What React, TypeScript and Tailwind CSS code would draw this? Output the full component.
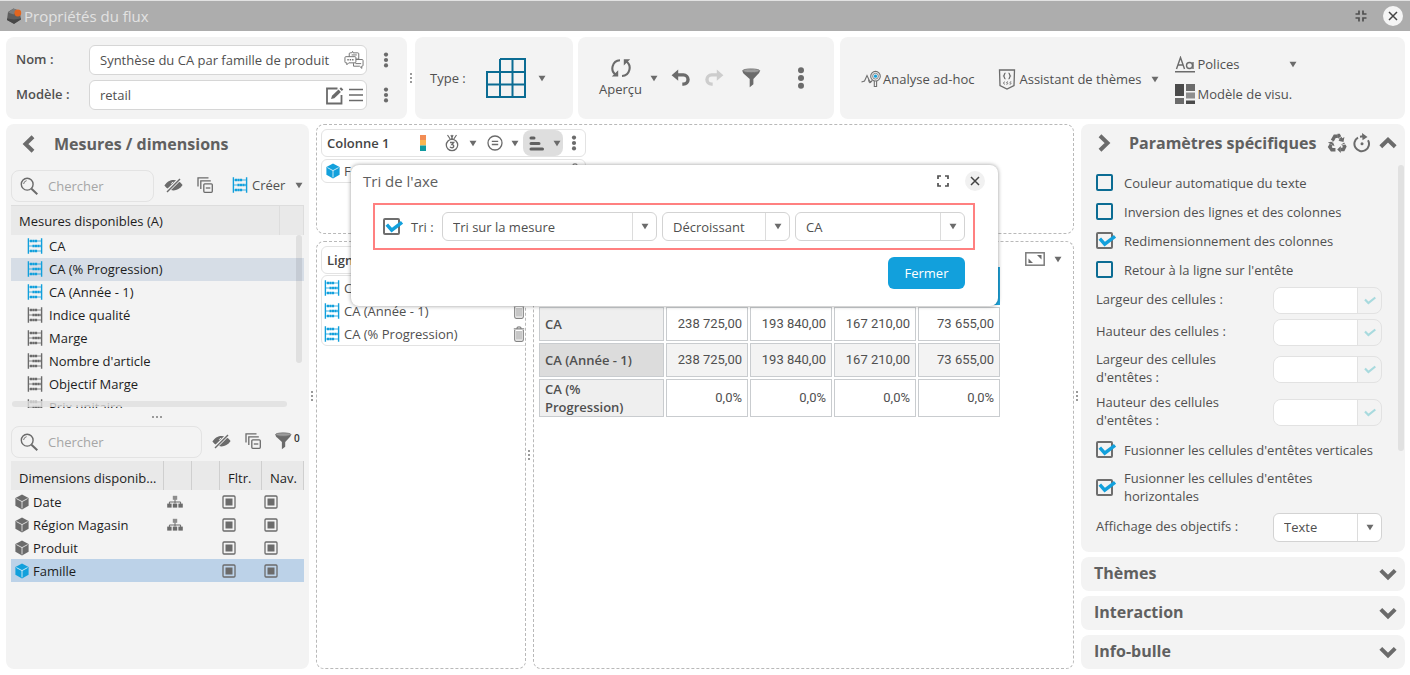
import React from "react";

type IconProps = { className?: string };

const BLUE = "text-[#12a0dc]";

function Caret({ className = "" }: IconProps) {
  return (
    <svg className={`shrink-0 ${className}`} width="8" height="7" viewBox="0 0 8 7" aria-hidden="true">
      <path d="M0.5 0.8h7L4 6.3z" fill="#6b6b6b" />
    </svg>
  );
}

function Kebab({ large = false }: { large?: boolean }) {
  return large ? (
    <svg width="8" height="22" viewBox="0 0 8 22" fill="#6b6b6b" aria-hidden="true">
      <circle cx="4" cy="3.3" r="3" />
      <circle cx="4" cy="11" r="3" />
      <circle cx="4" cy="18.7" r="3" />
    </svg>
  ) : (
    <svg width="6" height="16" viewBox="0 0 6 16" fill="#6b6b6b" aria-hidden="true">
      <circle cx="3" cy="2.6" r="2.1" />
      <circle cx="3" cy="8" r="2.1" />
      <circle cx="3" cy="13.4" r="2.1" />
    </svg>
  );
}

function Dots({ horizontal = false }: { horizontal?: boolean }) {
  return (
    <svg
      className="shrink-0"
      width={horizontal ? 11 : 3}
      height={horizontal ? 3 : 11}
      viewBox={horizontal ? "0 0 11 3" : "0 0 3 11"}
      fill="#9a9a9a"
      aria-hidden="true"
    >
      {[0, 4, 8].map((p) => (
        <rect key={p} x={horizontal ? p : 0} y={horizontal ? 0 : p} width="2" height="2" />
      ))}
    </svg>
  );
}

function Abacus({ className = "" }: IconProps) {
  return (
    <svg className={`shrink-0 ${className}`} width="16" height="16" viewBox="0 0 16 16" fill="none" stroke="currentColor" aria-hidden="true">
      <path d="M1.4 0.3v15.4M14.6 0.3v15.4" strokeWidth="1.4" />
      <path d="M1 3h14M1 8h14M1 13h14" strokeWidth="0.8" />
      <path d="M3 3h7.500M5.5 8h8M3 13h7.500" strokeWidth="2.6" strokeDasharray="2.1 0.4" />
    </svg>
  );
}

function Cube({ className = "" }: IconProps) {
  return (
    <svg className={`shrink-0 ${className}`} width="14" height="16" viewBox="0 0 14 16" aria-hidden="true">
      <path d="M7 0.6l6.6 3.5v7.7L7 15.4 0.4 11.8V4.1z" fill="currentColor" />
      <path d="M1.4 4.6L7 7.6l5.6-3M7 7.6v6.8" stroke="#fff" strokeOpacity="0.75" strokeWidth="1" fill="none" />
    </svg>
  );
}

function Trash() {
  return (
    <svg className="shrink-0 text-[#858585]" width="12" height="16" viewBox="0 0 12 16" fill="none" stroke="currentColor" aria-hidden="true">
      <path d="M0.8 2.9h10.4M3.8 2.6C4 0.9 5 0.8 6 0.8s2 .1 2.2 1.8" strokeWidth="1.3" />
      <path d="M1.7 4v9.8c0 .9.5 1.5 1.4 1.5h5.800c.9 0 1.4-.6 1.4-1.500V4" strokeWidth="1.2" />
      <path d="M4 5v8.6M6 5v8.6M8 5v8.6" strokeWidth="0.9" />
    </svg>
  );
}

function EyeOff() {
  return (
    <svg width="19" height="16" viewBox="0 0 19 16" aria-hidden="true">
      <path d="M0.4 8.6C3 4.400 6.200 3 9.600 3s6.500 1.400 9 5c-2.500 3.800-5.700 5.400-9.100 5.400S3 12.200 0.400 8.600z" fill="#6b6b6b" />
      <path d="M2.800 14.800L16 1.800" stroke="#f3f3f3" strokeWidth="3.400" />
      <path d="M3 15L16 2" stroke="#6b6b6b" strokeWidth="1.500" />
      <path d="M7.200 6.800a2.600 2.600 0 0 1 2-1.600" stroke="#f3f3f3" fill="none" strokeWidth="0.900" />
    </svg>
  );
}

function CollapseAll() {
  return (
    <svg width="16" height="16" viewBox="0 0 16 16" fill="none" stroke="#6b6b6b" strokeWidth="1.300" aria-hidden="true">
      <path d="M1 9.500V0.900h10.500" />
      <path d="M3.800 12V3.800h10" />
      <rect x="6.800" y="6.800" width="8.500" height="8.500" rx="1" />
      <path d="M8.800 11h4.500" />
    </svg>
  );
}

function Funnel({ small = false }: { small?: boolean }) {
  return (
    <svg width={small ? 17 : 19} height={small ? 18 : 20} viewBox="0 0 19 20" aria-hidden="true">
      <path d="M0.600 2.900h17.100c0 1.600-1 2.500-2.100 3.700L11.400 11v5.300L7.700 19.200V11L2.600 6.400C1.400 5.200 0.600 4.500 0.600 2.900z" fill="#6b6b6b" />
      <ellipse cx="9.200" cy="2.800" rx="8.600" ry="1.900" fill="#9c9c9c" stroke="#6b6b6b" strokeWidth="0.800" />
    </svg>
  );
}

function Magnifier() {
  return (
    <svg className="shrink-0" width="18" height="19" viewBox="0 0 18 19" fill="none" stroke="#6b6b6b" aria-hidden="true">
      <circle cx="7.200" cy="7.200" r="5.900" strokeWidth="1.400" />
      <path d="M3.600 7a3.700 3.700 0 0 1 3-3.300" strokeWidth="0.900" />
      <path d="M11.500 11.700l5.800 5.500" strokeWidth="2" />
    </svg>
  );
}

function Chevron({ dir }: { dir: "left" | "right" | "up" | "down" }) {
  const paths = {
    left: "M14 1.800L6.500 9l7.500 7.200",
    right: "M4 1.800L11.500 9 4 16.200",
    up: "M1.800 12.800L9 5.800l7.200 7",
    down: "M1.800 5.400L9 12.400l7.200-7",
  };
  return (
    <svg width="18" height="18" viewBox="0 0 18 18" fill="none" stroke="#6b6b6b" strokeWidth="4" aria-hidden="true">
      <path d={paths[dir]} />
    </svg>
  );
}

function Hierarchy() {
  return (
    <svg width="16" height="14" viewBox="0 0 16 14" fill="#6b6b6b" aria-hidden="true">
      <rect x="5.800" y="0.800" width="4.400" height="4" fill="#8d8d8d" />
      <path d="M8 4.500v4M2.400 9.500V7h11.200v2.500" stroke="#6b6b6b" strokeWidth="1" fill="none" />
      <rect x="0.200" y="8.600" width="4.400" height="4" />
      <rect x="5.800" y="8.600" width="4.400" height="4" />
      <rect x="11.400" y="8.600" width="4.400" height="4" />
    </svg>
  );
}

function SquareDot() {
  return (
    <svg width="14" height="14" viewBox="0 0 14 14" aria-hidden="true">
      <rect x="1" y="1" width="12" height="12" rx="1" fill="none" stroke="#6b6b6b" strokeWidth="1.300" />
      <rect x="3.500" y="3.500" width="7" height="7" fill="#6b6b6b" />
    </svg>
  );
}

function Tick({ className = "" }: IconProps) {
  return (
    <svg className={className} width="20" height="14" viewBox="0 0 20 14" fill="none" aria-hidden="true">
      <path d="M3.800 4.600l4.900 5.500L19 2.300" stroke="#12a0dc" strokeWidth="3.400" />
    </svg>
  );
}

function CheckBox({ id, checked }: { id: string; checked?: boolean }) {
  return (
    <span className="relative flex size-[18px] shrink-0 items-center">
      <input
        id={id}
        type="checkbox"
        defaultChecked={checked}
        className="peer size-[17px] appearance-none rounded-[2px] border-2 border-[#0b6c93] bg-transparent checked:border-[#6e6e6e]"
      />
      <Tick className="pointer-events-none absolute top-0.5 left-0 hidden peer-checked:block" />
    </span>
  );
}

function Select({ label, options, className = "" }: { label: string; options: string[]; className?: string }) {
  return (
    <span className={`relative flex h-[29px] rounded-md border border-[#d3d3d3] bg-white ${className}`}>
      <select aria-label={label} className="min-w-0 flex-1 appearance-none bg-transparent pr-6 pl-2.5 text-[#4f4f4f] outline-none">
        {options.map((o) => (
          <option key={o}>{o}</option>
        ))}
      </select>
      <span className="pointer-events-none absolute inset-y-0 right-0 flex w-6 items-center justify-center border-l border-[#dcdcdc]">
        <Caret />
      </span>
    </span>
  );
}

function SearchBox({ label, className = "" }: { label: string; className?: string }) {
  return (
    <label className={`flex h-8 items-center gap-2.5 rounded-lg border border-[#e3e3e3] pl-2 ${className}`}>
      <Magnifier />
      <input aria-label={label} placeholder="Chercher" className="w-0 flex-1 bg-transparent outline-none placeholder:text-[#a6a6a6]" />
    </label>
  );
}

function TitleBar() {
  return (
    <header className="flex h-[31px] items-center border-t border-[#e2e2e2] bg-[#adadad] pr-[7px] pl-1.5">
      <svg width="17" height="18" viewBox="0 0 17 18" aria-hidden="true">
        <path d="M7.500 1.500l6 2.500 1.500 8-7 4.500-7-3.500L2 5z" fill="#5e5e5e" />
        <path d="M2 5.500l5.500-4 4.500 2-4.500 4z" fill="#7d7d7d" />
        <path d="M1 11.500l7 1 7-1v1L8 17l-7-4z" fill="#474747" />
        <circle cx="11.800" cy="6" r="3.400" fill="#e2651f" />
      </svg>
      <h1 className="pl-px text-[15px] leading-5 text-[#e2e2e2]">Propriétés du flux</h1>
      <div className="ml-auto flex items-center gap-4">
        <button aria-label="Réduire">
          <svg width="12" height="12" viewBox="0 0 12 12" fill="none" stroke="#505050" strokeWidth="1.700" aria-hidden="true">
            <path d="M4 0.500V4H0.500M8 0.500V4h3.500M4 11.500V8H0.500M8 11.500V8h3.500" />
          </svg>
        </button>
        <button aria-label="Fermer la fenêtre" className="flex size-5 items-center justify-center rounded-full bg-[#f5f5f5]">
          <svg width="10" height="10" viewBox="0 0 10 10" stroke="#444" strokeWidth="1.500" aria-hidden="true">
            <path d="M1 1l8 8M9 1L1 9" />
          </svg>
        </button>
      </div>
    </header>
  );
}

function Toolbar() {
  return (
    <div className="flex">
      <section className="flex w-[401px] shrink-0 flex-col gap-[5px] rounded-lg bg-[#f3f3f3] pt-2 pr-[18px] pb-[9px] pl-2.5">
        <div className="flex items-center">
          <label htmlFor="nom" className="w-[73px] pb-0.5 font-semibold">Nom :</label>
          <div className="flex h-[30px] flex-1 items-center rounded-md border border-[#d6d6d6] bg-white pr-0.5 pl-2.5">
            <input id="nom" defaultValue="Synthèse du CA par famille de produit" className="w-0 flex-1 bg-transparent outline-none" />
            <button aria-label="Traductions">
              <svg width="20" height="20" viewBox="0 0 21 20" fill="#fff" stroke="#707070" strokeWidth="1" aria-hidden="true">
                <path d="M5.500 6.500V3.500a1 1 0 0 1 1-1h1.500l1-1.500.5 1.500h5a1 1 0 0 1 1 1v5.500H5.500z" />
                <path d="M8 4.700h5.500" />
                <path d="M12 9.500h7a1 1 0 0 1 1 1v5a1 1 0 0 1-1 1h-.5l.3 2.300-2.500-2.300h-6.300v-3z" />
                <path d="M12 13.800h6" />
                <path d="M2 6.500h9.500a1 1 0 0 1 1 1v4.500a1 1 0 0 1-1 1H5l-2 2v-2H2a1 1 0 0 1-1-1V7.500a1 1 0 0 1 1-1z" />
                <path d="M3.500 9.700h7" strokeWidth="1.600" strokeDasharray="1.500 1" />
              </svg>
            </button>
          </div>
          <button aria-label="Options du nom" className="ml-4"><Kebab /></button>
        </div>
        <div className="flex items-center">
          <label htmlFor="modele" className="w-[73px] pb-0.5 font-semibold">Modèle :</label>
          <div className="flex h-[30px] flex-1 items-center gap-1 rounded-md border border-[#d6d6d6] bg-white pr-0.5 pl-2.5">
            <input id="modele" defaultValue="retail" className="w-0 flex-1 bg-transparent outline-none" />
            <button aria-label="Éditer le modèle">
              <svg width="19" height="19" viewBox="0 0 19 19" fill="none" stroke="#6b6b6b" aria-hidden="true">
                <path d="M12.500 2.500H2v15h14.500V9" strokeWidth="1.800" />
                <path d="M6 13l1-3.200 6.500-6.300 2.400 2.400-6.600 6.300z" fill="#6b6b6b" stroke="none" />
                <path d="M14.500 2.700l1.500-1.500 2.300 2.300-1.500 1.500z" fill="#6b6b6b" stroke="none" />
              </svg>
            </button>
            <button aria-label="Liste des modèles">
              <svg width="16" height="14" viewBox="0 0 16 14" stroke="#6b6b6b" strokeWidth="1.600" aria-hidden="true">
                <path d="M1 1.500h14M1 7h14M1 12.500h14" />
              </svg>
            </button>
          </div>
          <button aria-label="Options du modèle" className="ml-4"><Kebab /></button>
        </div>
      </section>
      <div className="flex w-2 items-center justify-center"><Dots /></div>
      <section className="flex w-[158px] shrink-0 items-center rounded-lg bg-[#f3f3f3] pl-[15px]">
        <span className="w-14">Type :</span>
        <button aria-label="Type de tableau" className="flex items-center gap-3">
          <svg width="40" height="40" viewBox="0 0 40 40" fill="none" stroke="#0b6c93" strokeWidth="2" aria-hidden="true">
            <path d="M14 1h25v38H1V14h38M1 26.500h38M14 1v38M26.500 1v38" />
          </svg>
          <Caret />
        </button>
      </section>
      <section className="ml-[5px] flex w-64 shrink-0 items-center rounded-lg bg-[#f3f3f3] pl-[21px]">
        <button className="flex flex-col items-center">
          <svg width="20" height="22" viewBox="0 0 20 22" fill="none" stroke="#6b6b6b" strokeWidth="2.100" aria-hidden="true">
            <path d="M5.200 18A8 8 0 0 1 9 3.200M14.800 4.200A8 8 0 0 1 11 19" />
            <path d="M0.800 19.500h6.400v-6.300zM19.200 2.300h-6.400v6.300z" fill="#6b6b6b" stroke="none" />
          </svg>
          <span className="leading-5">Aperçu</span>
        </button>
        <button aria-label="Options de l'aperçu" className="ml-2"><Caret /></button>
        <button aria-label="Annuler" className="ml-[13px]">
          <svg width="20" height="18" viewBox="0 0 20 18" fill="#6b6b6b" aria-hidden="true">
            <path d="M0.600 6.200L7.200 0.600v3.700h5.300a6.200 6.200 0 0 1 0 12.500h-1.200v-3.200h1a3 3 0 0 0 0-6.100H7.200v4.300z" />
          </svg>
        </button>
        <button aria-label="Rétablir" className="ml-[13px]">
          <svg width="20" height="18" viewBox="0 0 20 18" fill="#cdcdcd" aria-hidden="true">
            <path d="M19.400 6.200L12.800 0.600v3.700H7.500a6.200 6.200 0 0 0 0 12.500h1.200v-3.200h-1a3 3 0 0 1 0-6.100h5.100v4.300z" />
          </svg>
        </button>
        <button aria-label="Filtrer" className="ml-[18px]"><Funnel /></button>
        <button aria-label="Plus d'options" className="ml-9"><Kebab large /></button>
      </section>
      <section className="ml-1.5 flex flex-1 items-center rounded-lg bg-[#f3f3f3] pt-0.5 pl-[21px]">
        <button className="flex items-center">
          <svg width="21" height="18" viewBox="0 0 21 18" fill="none" stroke="#707070" strokeWidth="1.100" aria-hidden="true">
            <path d="M0.500 12l3-1 2.500-5.500 3 6.500 2.500-1.500" />
            <path d="M7.500 9.500c.5 4 2 4 3 1.500" />
            <circle cx="14.500" cy="6.200" r="4.800" />
            <circle cx="14.500" cy="6.200" r="2.900" strokeWidth="0.800" />
            <circle cx="14.500" cy="6.200" r="1.600" fill="#12a0dc" stroke="none" />
            <path d="M13.300 11v5.500h2.300V11" />
          </svg>
          <span className="pl-px">Analyse ad-hoc</span>
        </button>
        <button className="ml-6 flex items-center">
          <svg width="18" height="21" viewBox="0 0 17 21" fill="none" stroke="#6b6b6b" strokeWidth="1.300" aria-hidden="true">
            <path d="M1 1h15l-.5 15.500-7 3.500-7-3.500z" />
            <path d="M7 4.200c-1.500 0-.8 2-1.800 2.800 1 .7.300 2.800 1.800 2.800M10 4.200c1.500 0 .8 2 1.800 2.800-1 .7-.3 2.800-1.800 2.800" />
            <path d="M6.300 12.900c-1.600-.4-1.600 2.700 0 2.300M9.500 12.900c-1.800-.3-1.500 1.200-.8 1.200s1 1.300-.9 1.100M12.800 12.900c-1.800-.3-1.500 1.200-.8 1.200s1 1.300-.9 1.100" strokeWidth="0.900" />
          </svg>
          <span className="pr-2.5 pl-[3px]">Assistant de thèmes</span>
          <Caret />
        </button>
        <div className="ml-4 flex flex-col gap-2">
          <button className="flex h-[22px] items-center">
            <svg width="20" height="17" viewBox="0 0 20 17" fill="none" stroke="#6b6b6b" strokeWidth="1.400" aria-hidden="true">
              <path d="M1.500 13L5.500 1.500 9.500 13M3 9h5" />
              <circle cx="14.500" cy="9.500" r="3" />
              <path d="M18 6v7M0 15.800h20" />
            </svg>
            <span className="w-[94px] pl-0.5 text-left">Polices</span>
            <Caret />
          </button>
          <button className="flex h-[22px] items-center">
            <svg width="20" height="20" viewBox="0 0 20 20" aria-hidden="true">
              <rect x="0" y="0" width="9" height="12" fill="#4a4a4a" />
              <rect x="0" y="14" width="9" height="6" fill="#6b6b6b" />
              <rect x="11" y="0" width="9" height="7" fill="#6b6b6b" />
              <rect x="11" y="8.500" width="9" height="6" fill="#8e8e8e" />
              <rect x="11" y="16.500" width="9" height="3.500" fill="#4a4a4a" />
            </svg>
            <span className="pl-0.5">Modèle de visu.</span>
          </button>
        </div>
      </section>
    </div>
  );
}

const measures = [
  { name: "CA", used: true },
  { name: "CA (% Progression)", used: true, selected: true },
  { name: "CA (Année - 1)", used: true },
  { name: "Indice qualité" },
  { name: "Marge" },
  { name: "Nombre d'article" },
  { name: "Objectif Marge" },
  { name: "Prix unitaire" },
];

const dimensions = [
  { name: "Date", tree: true },
  { name: "Région Magasin", tree: true },
  { name: "Produit" },
  { name: "Famille", selected: true },
];

function LeftPanel() {
  return (
    <aside className="flex w-[303px] shrink-0 flex-col rounded-lg bg-[#f3f3f3] px-[5px]">
      <div className="flex h-[46px] items-center gap-4 pb-1.5 pl-2">
        <button aria-label="Replier le panneau"><Chevron dir="left" /></button>
        <h2 className="pl-px text-base leading-6 font-bold text-[#606060]">Mesures / dimensions</h2>
      </div>
      <div className="flex items-center">
        <SearchBox label="Chercher une mesure" className="w-[143px]" />
        <button aria-label="Masquer les mesures" className="ml-2.5 pb-0.5"><EyeOff /></button>
        <button aria-label="Tout replier" className="ml-3.5 pb-0.5"><CollapseAll /></button>
        <button className="ml-[19px] flex items-center pb-0.5">
          <Abacus className={BLUE} />
          <span className="pr-2.5 pl-1">Créer</span>
          <Caret />
        </button>
      </div>
      <div className="relative mt-[3px] h-[203px] overflow-hidden text-[#1d1d1d]">
        <table className="w-full table-fixed border-collapse">
          <colgroup>
            <col />
            <col className="w-6" />
          </colgroup>
          <thead>
            <tr className="h-[29px] bg-[#e9e9e9]">
              <th className="border-t border-r border-[#dddddd] pt-0.5 pl-2 text-left font-normal">Mesures disponibles (A)</th>
              <th className="border-t border-r border-[#dddddd]" aria-label="Actions" />
            </tr>
          </thead>
          <tbody>
            {measures.map((m) => (
              <tr key={m.name} className={`h-[23px] ${m.selected ? "bg-[#d6dde6]" : ""}`}>
                <td colSpan={2} className="p-0">
                  <span className="flex items-center gap-1.5 pb-px pl-4">
                    <Abacus className={m.used ? BLUE : "text-[#6b6b6b]"} />
                    {m.name}
                  </span>
                </td>
              </tr>
            ))}
          </tbody>
        </table>
        <span className="absolute top-[30px] right-0.5 h-32 w-1.5 rounded-full bg-black/8" />
        <span className="absolute bottom-px left-px h-1.5 w-[275px] rounded-full bg-[#dedede]/80" />
      </div>
      <div className="flex h-[18px] items-center justify-center"><Dots horizontal /></div>
      <div className="flex items-center">
        <SearchBox label="Chercher une dimension" className="w-[191px]" />
        <button aria-label="Masquer les dimensions" className="ml-2.5 pb-0.5"><EyeOff /></button>
        <button aria-label="Tout replier" className="ml-3.5 pb-0.5"><CollapseAll /></button>
        <button aria-label="Filtres" className="ml-3.5 flex pb-0.5">
          <Funnel small />
          <sup className="top-0 pl-0.5 text-[10px] leading-3 font-semibold text-[#333]">0</sup>
        </button>
      </div>
      <table className="mt-[3px] w-full table-fixed border-collapse text-[#1d1d1d]">
        <colgroup>
          <col />
          <col className="w-7" />
          <col className="w-7" />
          <col className="w-[42px]" />
          <col className="w-[42px]" />
        </colgroup>
        <thead>
          <tr className="h-[29px] bg-[#e9e9e9]">
            <th className="truncate border-r border-[#cfcfcf] pt-1 pr-1.5 pl-2 text-left font-normal">Dimensions disponibles (A)</th>
            <th className="border-r border-[#cfcfcf]" aria-label="Hiérarchie" />
            <th className="border-r border-[#cfcfcf]" aria-label="État" />
            <th className="border-r border-[#cfcfcf] pt-1 pr-0 pl-2 text-left font-normal">Fltr.</th>
            <th className="border-r border-[#cfcfcf] pt-1 pr-0 pl-2 text-left font-normal">Nav.</th>
          </tr>
        </thead>
        <tbody>
          {dimensions.map((d) => (
            <tr key={d.name} className={`h-[23px] ${d.selected ? "bg-[#bcd2e8]" : ""}`}>
              <td className="p-0">
                <span className="flex items-center gap-1 pl-1">
                  <Cube className={d.selected ? BLUE : "text-[#6b6b6b]"} />
                  {d.name}
                </span>
              </td>
              <td className="p-0 pl-[3px]">{d.tree && <Hierarchy />}</td>
              <td />
              <td className="p-0 pl-0.5"><SquareDot /></td>
              <td className="p-0 pl-0.5"><SquareDot /></td>
            </tr>
          ))}
        </tbody>
      </table>
    </aside>
  );
}

const pivotRows = [
  { label: "CA", values: ["238 725,00", "193 840,00", "167 210,00", "73 655,00"] },
  { label: "CA (Année - 1)", values: ["238 725,00", "193 840,00", "167 210,00", "73 655,00"], alt: true },
  { label: "CA (% Progression)", values: ["0,0%", "0,0%", "0,0%", "0,0%"] },
];

function Workspace() {
  return (
    <main className="flex min-w-0 flex-1 flex-col gap-[7px]">
      <section className="h-[110px] rounded-lg border border-dashed border-[#b9b9b9] p-1">
        <div className="flex h-7 w-[265px] items-center rounded-md border border-[#e3e3e3] pr-2 pl-[5px]">
          <span className="flex-1 font-semibold text-[#444]">Colonne 1</span>
          <button aria-label="Couleurs" className="mr-[19px]">
            <svg width="6" height="16" viewBox="0 0 6 16" aria-hidden="true">
              <path d="M0 0h6v5H0z" fill="#f28c54" />
              <path d="M0 5h6v5.500H0z" fill="#fbb651" />
              <path d="M0 10.500h6V16H0z" fill="#0f9aa0" />
            </svg>
          </button>
          <button aria-label="Classement" className="flex items-center gap-2.5">
            <svg width="14" height="18" viewBox="0 0 14 18" fill="none" stroke="#6b6b6b" aria-hidden="true">
              <path d="M2.500 1l3 4.500M6 1l1.500 4M8 1L6.500 5M11.500 1l-3 4.500" strokeWidth="1.200" />
              <circle cx="7" cy="11" r="5.700" strokeWidth="1.300" />
              <path d="M5 8.500h3.600L7 10.500c2.200-.2 2.300 3.200 0 3.200-.9 0-1.700-.3-2-.9" strokeWidth="1.400" />
            </svg>
            <Caret />
          </button>
          <button aria-label="Agrégation" className="ml-2.5 flex items-center gap-2">
            <svg width="16" height="16" viewBox="0 0 16 16" fill="none" stroke="#6b6b6b" strokeWidth="1.300" aria-hidden="true">
              <circle cx="8" cy="8" r="7" />
              <path d="M4.800 6.300h6.400M4.800 9.500h6.400" />
            </svg>
            <Caret />
          </button>
          <button aria-label="Tri de l'axe" className="mx-1 flex h-[26px] w-10 items-center justify-between rounded-lg bg-[#dedede] pr-0.5 pl-1.5">
            <svg width="16" height="15" viewBox="0 0 16 15" stroke="#606060" strokeWidth="3" strokeLinecap="round" aria-hidden="true">
              <path d="M2 2h3M2 7.500h8M2 13h11.500" />
            </svg>
            <Caret />
          </button>
          <button aria-label="Options de colonne" className="ml-1"><Kebab /></button>
        </div>
        <div className="mt-0.5 flex h-6 w-[265px] items-center gap-1 rounded-md border border-[#e3e3e3] pr-1 pl-1">
          <Cube className={BLUE} />
          <span className="flex-1">Famille</span>
          <button aria-label="Supprimer Famille"><Trash /></button>
        </div>
      </section>
      <div className="flex flex-1">
        <section className="w-[210px] shrink-0 overflow-hidden rounded-lg border border-dashed border-[#b9b9b9] p-1">
          <div className="flex h-7 w-[265px] items-center rounded-md border border-[#e3e3e3] pl-[5px] font-semibold text-[#444]">Ligne 1</div>
          <ul className="mt-px w-[265px] rounded-md border border-[#e3e3e3]">
            {["CA", "CA (Année - 1)", "CA (% Progression)"].map((name) => (
              <li key={name} className="flex h-[23px] items-center gap-1 pl-0.5">
                <Abacus className={BLUE} />
                <span className="w-[165px]">{name}</span>
                <button aria-label={`Supprimer ${name}`}><Trash /></button>
              </li>
            ))}
          </ul>
        </section>
        <div className="flex w-[7px] items-center justify-center"><Dots /></div>
        <section className="flex-1 rounded-lg border border-dashed border-[#b9b9b9] p-[3px]">
          <button aria-label="Plein écran" className="mt-2 mr-2 ml-auto flex h-3 items-center gap-[9px]">
            <svg width="20" height="14" viewBox="0 0 20 14" fill="none" aria-hidden="true">
              <rect x="0.800" y="0.800" width="18.400" height="12.400" stroke="#7c7c7c" strokeWidth="1.500" />
              <path d="M12 3h4.500v4.500zM3.500 6.500V11H8z" fill="#6b6b6b" />
            </svg>
            <Caret />
          </button>
          <table className="table-fixed border-separate border-spacing-x-[2px] border-spacing-y-[2px]">
            <colgroup>
              <col className="w-[125px]" />
              <col className="w-[82px]" />
              <col className="w-[82px]" />
              <col className="w-[82px]" />
              <col className="w-[82px]" />
            </colgroup>
            <thead>
              <tr className="h-[38px]">
                <td />
                {[0, 1, 2, 3].map((c) => (
                  <td key={c} className="bg-[#1ea5dc]" />
                ))}
              </tr>
            </thead>
            <tbody>
              {pivotRows.map((r) => (
                <tr key={r.label} className="h-[34px]">
                  <th
                    scope="row"
                    className={`border border-[#c9cccf] px-[5px] py-0 text-left leading-[18px] font-semibold text-[#505050] ${r.alt ? "bg-[#dcdcdc]" : "bg-[#efefef]"}`}
                  >
                    {r.label}
                  </th>
                  {r.values.map((v, i) => (
                    <td key={i} className={`border border-[#c9cccf] px-[5px] py-0 text-right font-['Roboto',sans-serif] whitespace-nowrap text-[#505050] ${r.alt ? "bg-[#f3f3f3]" : "bg-white"}`}>
                      {v}
                    </td>
                  ))}
                </tr>
              ))}
            </tbody>
          </table>
        </section>
      </div>
    </main>
  );
}

function CheckRow({ id, label, checked, className = "h-[29px]" }: { id: string; label: string; checked?: boolean; className?: string }) {
  return (
    <div className={`flex items-center gap-2.5 ${className}`}>
      <CheckBox id={id} checked={checked} />
      <label htmlFor={id}>{label}</label>
    </div>
  );
}

function SizeRow({ id, label, className = "h-8" }: { id: string; label: string; className?: string }) {
  return (
    <div className={`flex items-center ${className}`}>
      <label htmlFor={id} className="w-36 pb-0.5">{label}</label>
      <div className="ml-auto flex h-[27px] w-[109px] overflow-hidden rounded-lg border border-[#e2e2e2]">
        <input id={id} type="text" className="w-0 flex-1 bg-white px-2 outline-none" />
        <button aria-label={`Valider ${label}`} className="flex w-6 items-center justify-center border-l border-[#e2e2e2]">
          <svg width="12" height="9" viewBox="0 0 12 9" fill="none" stroke="#a8dade" strokeWidth="2.200" aria-hidden="true">
            <path d="M1 3.500l3.400 3.500L11.300 1.500" />
          </svg>
        </button>
      </div>
    </div>
  );
}

function RightPanel() {
  return (
    <aside className="flex w-[324px] shrink-0 flex-col gap-[5px]">
      <section className="relative flex-1 rounded-lg bg-[#f3f3f3] pr-[23px] pl-[15px]">
        <div className="-mr-[15px] flex h-11 items-center pb-1.5">
          <button aria-label="Replier le panneau"><Chevron dir="right" /></button>
          <h2 className="flex-1 pl-[15px] text-base leading-6 font-bold whitespace-nowrap text-[#606060]">Paramètres spécifiques</h2>
          <button aria-label="Recycler" className="mr-1.5">
            <svg width="20" height="20" viewBox="0 0 20 20" fill="none" stroke="#6b6b6b" strokeWidth="3.400" aria-hidden="true">
              <path d="M5.300 7.600L7.800 3.200h3" />
              <path d="M10.500 2.500h1.300l2.300 4" />
              <path d="M15.700 10.500l2 3.200-1.400 2.800h-2.500" />
              <path d="M9 16.700H4.800L2.800 14l1.400-2.400" />
              <path d="M11.300 7.700l5.200 1.300.9-5zM13.800 13v7l-3.600-3.400zM0.900 9.500l5-1.200 1.600 4.900z" fill="#6b6b6b" stroke="none" />
              <path d="M2.600 7.100l5 3.400M11.800 5.500l3.500-2.700M14.200 12.300l4.600-1.400M8.800 14v6" stroke="#f3f3f3" strokeWidth="0.800" />
            </svg>
          </button>
          <button aria-label="Réinitialiser" className="mr-2">
            <svg width="18" height="20" viewBox="0 0 18 20" fill="none" stroke="#6b6b6b" strokeWidth="2" aria-hidden="true">
              <path d="M5 4.600A7.300 7.300 0 1 0 15 7.200M7 3.700l3-.4" />
              <path d="M9 0l5.500 4-5 3.200z" fill="#6b6b6b" stroke="none" />
              <circle cx="9" cy="10.700" r="1.500" fill="#6b6b6b" stroke="none" />
            </svg>
          </button>
          <button aria-label="Replier la section"><Chevron dir="up" /></button>
        </div>
        <CheckRow id="couleur" label="Couleur automatique du texte" />
        <CheckRow id="inversion" label="Inversion des lignes et des colonnes" />
        <CheckRow id="redim" label="Redimensionnement des colonnes" checked />
        <CheckRow id="retour" label="Retour à la ligne sur l'entête" />
        <SizeRow id="lc" label="Largeur des cellules :" />
        <SizeRow id="hc" label="Hauteur des cellules :" />
        <SizeRow id="le" label="Largeur des cellules d'entêtes :" className="h-[42px]" />
        <SizeRow id="he" label="Hauteur des cellules d'entêtes :" className="h-11" />
        <CheckRow id="fv" label="Fusionner les cellules d'entêtes verticales" checked className="-mr-4 h-[31px]" />
        <CheckRow id="fh" label="Fusionner les cellules d'entêtes horizontales" checked className="h-11 pr-10" />
        <div className="flex h-9 items-center justify-between">
          <span className="pb-0.5">Affichage des objectifs :</span>
          <Select label="Affichage des objectifs" options={["Texte"]} className="w-[109px]" />
        </div>
        <span className="absolute top-[41px] right-px h-[286px] w-1.5 rounded-full bg-[#e1e1e1]" />
      </section>
      {["Thèmes", "Interaction", "Info-bulle"].map((title) => (
        <button key={title} className="flex h-[34px] items-center justify-between rounded-lg bg-[#f3f3f3] pr-2 pl-[13px]">
          <h2 className="pb-0.5 text-base leading-6 font-bold text-[#606060]">{title}</h2>
          <Chevron dir="down" />
        </button>
      ))}
    </aside>
  );
}

function SortDialog() {
  return (
    <div
      role="dialog"
      aria-label="Tri de l'axe"
      className="absolute top-[165px] left-[351px] w-[647px] rounded-lg bg-white pb-[17px] shadow-[0_0_4px_rgba(0,0,0,0.4)]"
    >
      <div className="flex h-[38px] items-center pr-[13px] pb-1.5 pl-3">
        <h2 className="flex-1 text-[15px] leading-5 text-[#5f5f5f]">Tri de l'axe</h2>
        <button aria-label="Agrandir" className="mr-4">
          <svg width="12" height="12" viewBox="0 0 12 12" fill="none" stroke="#505050" strokeWidth="1.700" aria-hidden="true">
            <path d="M1 4V1h3M8 1h3v3M1 8v3h3M11 8v3H8" />
          </svg>
        </button>
        <button aria-label="Fermer le dialogue" className="flex size-5 items-center justify-center rounded-full bg-[#f1f1f1]">
          <svg width="10" height="10" viewBox="0 0 10 10" stroke="#444" strokeWidth="1.500" aria-hidden="true">
            <path d="M1 1l8 8M9 1L1 9" />
          </svg>
        </button>
      </div>
      <div className="mr-[23px] ml-[22px] flex h-[47px] items-center gap-[5px] border-2 border-[#ff8080] pl-2">
        <CheckBox id="tri" checked />
        <label htmlFor="tri" className="w-[31px] pl-[5px] whitespace-nowrap">Tri :</label>
        <Select label="Type de tri" options={["Tri sur la mesure"]} className="w-[215px]" />
        <Select label="Ordre" options={["Décroissant"]} className="w-32" />
        <Select label="Mesure" options={["CA"]} className="w-[170px]" />
      </div>
      <div className="flex justify-end pt-[7px] pr-[33px]">
        <button className="h-8 w-[77px] rounded-md bg-[#12a0dc] text-white">Fermer</button>
      </div>
    </div>
  );
}

export default function App() {
  return (
    <div className="relative flex min-h-screen flex-col bg-white font-['Open_Sans',sans-serif] text-[13px] leading-[18px] text-[#505050]">
      <TitleBar />
      <div className="flex flex-1 flex-col gap-[5px] pt-1.5 pr-[5px] pb-1.5 pl-1.5">
        <Toolbar />
        <div className="flex flex-1">
          <LeftPanel />
          <div className="flex w-[7px] items-center justify-center"><Dots /></div>
          <Workspace />
          <div className="flex w-[7px] items-center justify-center"><Dots /></div>
          <RightPanel />
        </div>
      </div>
      <SortDialog />
    </div>
  );
}
